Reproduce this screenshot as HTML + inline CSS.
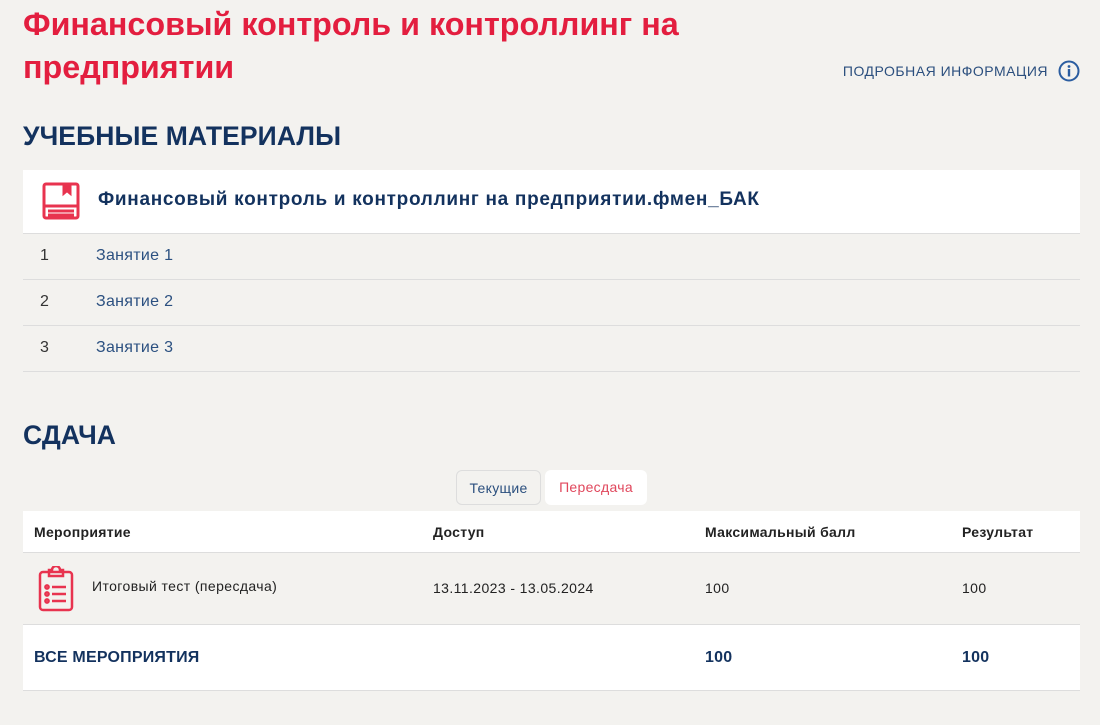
<!DOCTYPE html>
<html><head><meta charset="utf-8"><style>
*{margin:0;padding:0;box-sizing:border-box}
body{width:1100px;height:725px;background:#f3f2ef;font-family:"Liberation Sans",sans-serif;position:relative;overflow:hidden}
.abs{position:absolute}
h1{position:absolute;left:23px;top:3px;color:#e31e3f;font-size:32.3px;line-height:43px;font-weight:bold;letter-spacing:0px}
.h2{position:absolute;left:23px;color:#13325e;font-size:26.5px;font-weight:bold;letter-spacing:0.1px}
.info{position:absolute;right:20px;top:60px;color:#2b4f7e;font-size:14px;letter-spacing:0.5px;display:flex;align-items:center;gap:10px}
.box{position:absolute;left:23px;width:1057px;background:#fff}
.row{position:absolute;left:23px;width:1057px;height:46px;border-bottom:1px solid #ddd;font-size:16px;letter-spacing:0.3px}
.row span{position:absolute;top:13px}
.n{left:17px;color:#333}.l{left:73px;color:#2b5080}
.tab{position:absolute;top:470px;height:35px;border-radius:6px;font-size:14px;line-height:35px;text-align:center;letter-spacing:0.3px}
.th{position:absolute;top:524px;font-size:14px;font-weight:bold;color:#222;letter-spacing:0.3px}
.td{position:absolute;font-size:14px;color:#222;letter-spacing:0.4px}
.tf{position:absolute;top:649px;font-size:16px;font-weight:bold;color:#13325e;letter-spacing:0.2px}
</style></head><body>
<h1>Финансовый контроль и контроллинг на<br>предприятии</h1>
<div class="info">ПОДРОБНАЯ ИНФОРМАЦИЯ
<svg width="22" height="22" viewBox="0 0 22 22"><circle cx="11" cy="11" r="9.5" fill="none" stroke="#2b5da0" stroke-width="2"/><circle cx="11" cy="6.5" r="1.4" fill="#2b5da0"/><rect x="9.8" y="9" width="2.4" height="7.5" fill="#2b5da0"/></svg></div>
<div class="h2" style="top:121px">УЧЕБНЫЕ МАТЕРИАЛЫ</div>
<div class="box" style="top:170px;height:64px;border-bottom:1px solid #ddd">
<svg class="abs" style="left:19px;top:12px" width="40" height="40" viewBox="0 0 40 40" fill="none" stroke="#e8334f" stroke-width="3"><rect x="2" y="2" width="34" height="34" rx="2"/><path d="M2 24H36M6 29H32M6 33H32"/><path d="M22 2V11L25 8.5L28 11V2" fill="#e8334f"/></svg>
<div class="abs" style="left:75px;top:19px;font-size:19px;color:#13325e;font-weight:bold;letter-spacing:0.7px">Финансовый контроль и контроллинг на предприятии.фмен_БАК</div>
</div>
<div class="row" style="top:234px"><span class="n">1</span><span class="l">Занятие 1</span></div>
<div class="row" style="top:280px"><span class="n">2</span><span class="l">Занятие 2</span></div>
<div class="row" style="top:326px"><span class="n">3</span><span class="l">Занятие 3</span></div>
<div class="h2" style="top:420px">СДАЧА</div>
<div class="tab" style="left:456px;width:85px;border:1px solid #ddd;color:#2b4f7e">Текущие</div>
<div class="tab" style="left:545px;width:102px;background:#fff;color:#e0475c">Пересдача</div>
<div class="box" style="top:511px;height:42px;border-bottom:1px solid #ddd"></div>
<div class="th" style="left:34px">Мероприятие</div><div class="th" style="left:433px">Доступ</div><div class="th" style="left:705px">Максимальный балл</div><div class="th" style="left:962px">Результат</div>
<svg class="abs" style="left:38px;top:566px" width="36" height="46" viewBox="0 0 36 46" fill="none" stroke="#e8334f" stroke-width="2.5"><rect x="2" y="6" width="32" height="38" rx="3"/><path d="M11 6V4H14A4 4 0 0 1 22 4H25V10H11Z"/><circle cx="9" cy="21" r="1.6"/><circle cx="9" cy="28" r="1.6"/><circle cx="9" cy="35" r="1.6"/><path d="M14 21H28M14 28H28M14 35H28"/></svg>
<div class="td" style="left:92px;top:578px">Итоговый тест (пересдача)</div>
<div class="td" style="left:433px;top:580px">13.11.2023 - 13.05.2024</div>
<div class="td" style="left:705px;top:580px">100</div><div class="td" style="left:962px;top:580px">100</div>
<div class="box" style="top:624px;height:67px;border-top:1px solid #ddd;border-bottom:1px solid #ddd"></div>
<div class="tf" style="left:34px">ВСЕ МЕРОПРИЯТИЯ</div><div class="tf" style="left:705px">100</div><div class="tf" style="left:962px">100</div>
</body></html>
